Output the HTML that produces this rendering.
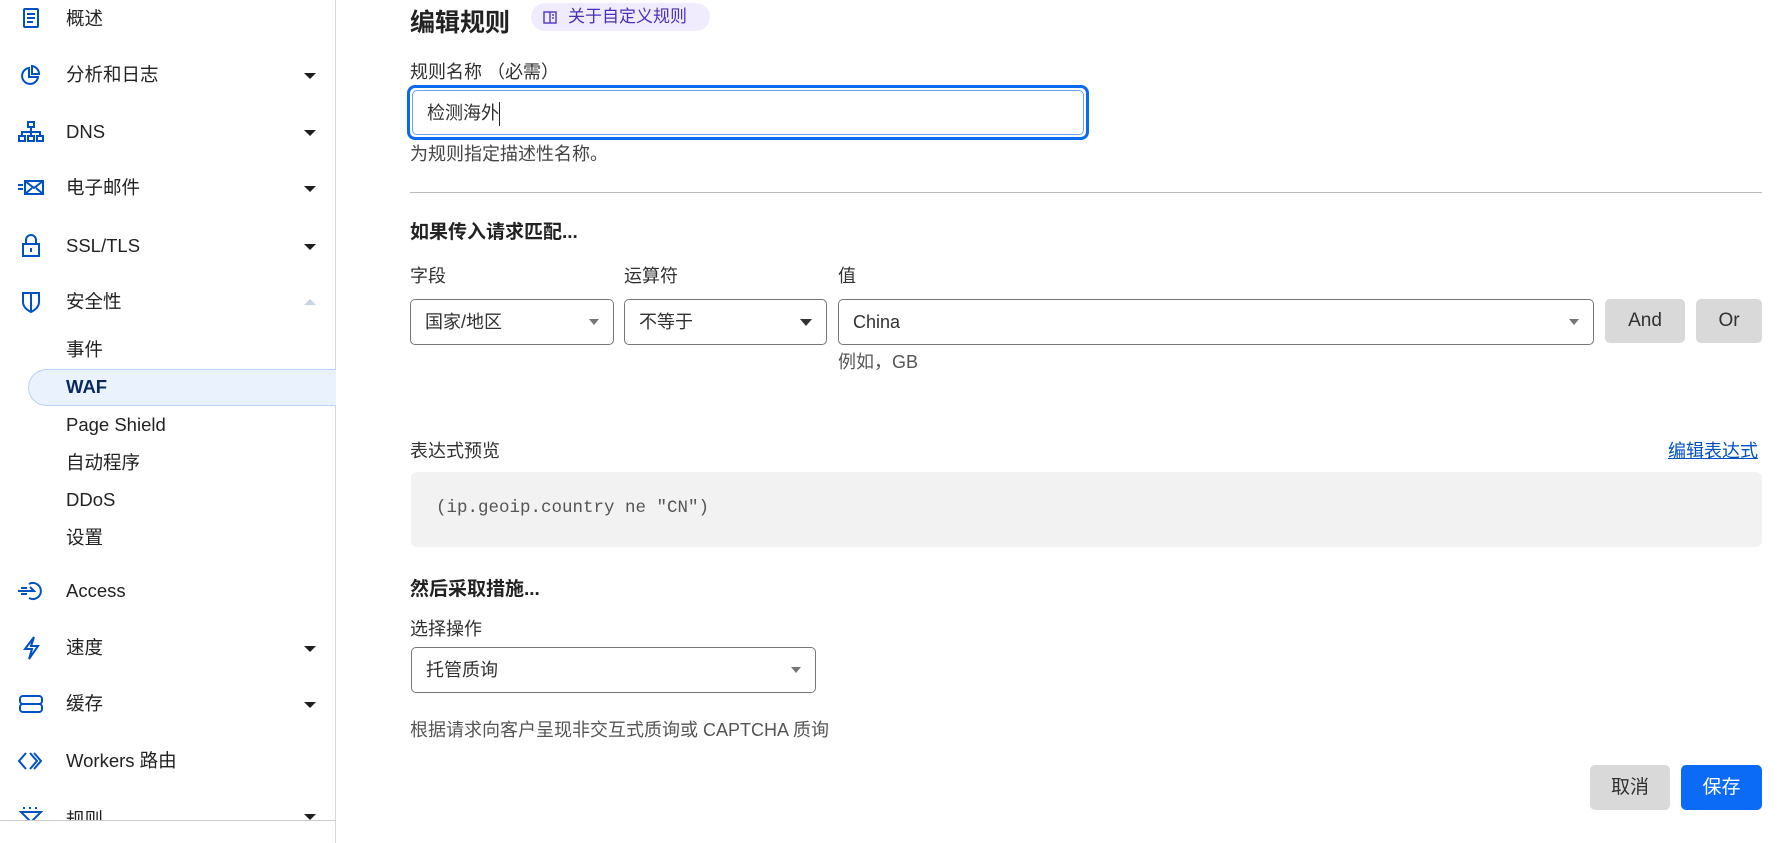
<!DOCTYPE html>
<html><head><meta charset="utf-8"><style>
*{box-sizing:border-box;margin:0;padding:0}
body{width:1788px;height:843px;overflow:hidden;background:#fff;font-family:"Liberation Sans","Noto Sans CJK SC",sans-serif;color:#313131;font-size:18px;position:relative}
.a{position:absolute;white-space:nowrap}
.side{position:absolute;left:0;top:0;width:336px;height:843px;border-right:1px solid #d9d9d9}
.it{position:absolute;left:66px;font-size:18.5px;color:#222;line-height:24px}
.ic{position:absolute;left:17px;width:28px;height:24px}
.car{position:absolute;left:304px;width:0;height:0;border-left:6px solid transparent;border-right:6px solid transparent;border-top:6px solid #1d1f20}
.sel{position:absolute;border:1px solid #777;border-radius:5px;background:#fff;font-size:18px;line-height:44px;padding-left:14px}
.tri{position:absolute;right:14px;top:19px;border-left:6px solid transparent;border-right:6px solid transparent;border-top:7px solid #666}
.btn{position:absolute;background:#d9d9d9;border-radius:5px;text-align:center;font-size:19px;color:#313131}
</style></head><body>
<div class="side">
<svg class="ic" style="top:7px" viewBox="0 0 28 24" fill="none" stroke="#0051c3" stroke-width="2"><rect x="7" y="2" width="14" height="18" rx="1"/><path d="M10 7h8M10 11h8M10 15h6"/></svg>
<div class="it" style="top:7px">概述</div>
<svg class="ic" style="top:63px" viewBox="0 0 28 24" fill="none" stroke="#0051c3" stroke-width="2"><path d="M12 5a8 8 0 1 0 9 9h-9z"/><path d="M15 3a8 8 0 0 1 7 8h-7z"/></svg>
<div class="it" style="top:63px">分析和日志</div><div class="car" style="top:73px"></div>
<svg class="ic" style="top:120px" viewBox="0 0 28 24" fill="none" stroke="#0051c3" stroke-width="2"><rect x="11" y="2" width="6" height="5"/><rect x="2" y="16" width="6" height="5"/><rect x="11" y="16" width="6" height="5"/><rect x="20" y="16" width="6" height="5"/><path d="M14 7v9M5 16v-4h18v4"/></svg>
<div class="it" style="top:120px">DNS</div><div class="car" style="top:130px"></div>
<svg class="ic" style="top:176px" viewBox="0 0 28 24" fill="none" stroke="#0051c3" stroke-width="2"><rect x="8" y="5" width="18" height="13"/><path d="M8 5l9 7 9-7M8 18l7-6M26 18l-7-6M1 9h5M1 13h5"/></svg>
<div class="it" style="top:176px">电子邮件</div><div class="car" style="top:186px"></div>
<svg class="ic" style="top:234px" viewBox="0 0 28 24" fill="none" stroke="#0051c3" stroke-width="2"><rect x="6" y="10" width="16" height="12"/><path d="M9 10V6a5 5 0 0 1 10 0v4M14 14v4"/></svg>
<div class="it" style="top:234px">SSL/TLS</div><div class="car" style="top:244px"></div>
<svg class="ic" style="top:290px" viewBox="0 0 28 24" fill="none" stroke="#0051c3" stroke-width="2"><path d="M6 3h16v9c0 5-4 8-8 10-4-2-8-5-8-10z"/><path d="M14 3v19"/></svg>
<div class="it" style="top:290px">安全性</div><div style="position:absolute;left:304px;top:299px;border-left:6px solid transparent;border-right:6px solid transparent;border-bottom:6px solid #c8d4e4"></div>
<div class="it" style="top:338px">事件</div>
<div style="position:absolute;left:28px;top:369px;width:308px;height:37px;background:#eaf2fd;border:1px solid #b8d2f5;border-right:none;border-radius:19px 0 0 19px"></div>
<div class="it" style="top:375px;font-weight:bold;color:#0a2a5e">WAF</div>
<div class="it" style="top:413px">Page Shield</div>
<div class="it" style="top:451px">自动程序</div>
<div class="it" style="top:488px">DDoS</div>
<div class="it" style="top:526px">设置</div>
<svg class="ic" style="top:579px" viewBox="0 0 28 24" fill="none" stroke="#0051c3" stroke-width="2"><path d="M12 5a8 8 0 1 1 0 14"/><path d="M1 12h16l-4-4M4 9h6M4 15h6"/></svg>
<div class="it" style="top:579px">Access</div>
<svg class="ic" style="top:636px" viewBox="0 0 28 24" fill="none" stroke="#0051c3" stroke-width="2"><path d="M17 1L8 13h7l-3 10 9-13h-7z"/></svg>
<div class="it" style="top:636px">速度</div><div class="car" style="top:646px"></div>
<svg class="ic" style="top:692px" viewBox="0 0 28 24" fill="none" stroke="#0051c3" stroke-width="2"><rect x="3" y="4" width="22" height="8" rx="3"/><rect x="3" y="12" width="22" height="8" rx="3"/></svg>
<div class="it" style="top:692px">缓存</div><div class="car" style="top:702px"></div>
<svg class="ic" style="top:749px" viewBox="0 0 28 24" fill="none" stroke="#0051c3" stroke-width="2"><path d="M9 4l-7 8 7 8M13 4l7 8-7 8M17 4l7 8-7 8"/></svg>
<div class="it" style="top:749px">Workers 路由</div>
<div style="position:absolute;left:0;top:806px;width:336px;height:14px;overflow:hidden">
<svg class="ic" style="top:0px" viewBox="0 0 28 24" fill="none" stroke="#0051c3" stroke-width="2"><path d="M6 2h2M12 2h2M18 2h2M4 6h20l-10 10z"/></svg>
<div class="it" style="top:2px">规则</div></div>
<div class="car" style="top:814px"></div>
<div style="position:absolute;left:0;top:820px;width:336px;height:1px;background:#ccc"></div>
</div>

<div class="a" style="left:410px;top:3px;font-size:25px;font-weight:bold;color:#222">编辑规则</div>
<div class="a" style="left:531px;top:3px;width:179px;height:28px;background:#f1ecfd;border-radius:14px;color:#4a2fb8;font-size:17px;line-height:28px;padding-left:37px">关于自定义规则</div>
<svg class="a" style="left:543px;top:11px" width="14" height="13" viewBox="0 0 14 13" fill="none" stroke="#5a40c8" stroke-width="1.5"><rect x="1" y="1" width="12" height="11"/><path d="M7 1v11M9 4h2M9 7h2"/></svg>

<div class="a" style="left:410px;top:58px">规则名称 （必需）</div>
<div style="position:absolute;left:407px;top:85px;width:682px;height:55px;border:3px solid #0b6bf0;border-radius:8px;padding:2px"><div style="height:100%;border:1px solid #6aa3f3;border-radius:5px;padding-left:14px;line-height:44px;font-size:18px">检测海外<span style="display:inline-block;width:1px;height:24px;background:#222;vertical-align:middle"></span></div></div>
<div class="a" style="left:410px;top:140px;color:#444">为规则指定描述性名称。</div>
<div style="position:absolute;left:410px;top:192px;width:1352px;height:1px;background:#bbb"></div>
<div class="a" style="left:410px;top:217px;font-size:19px;font-weight:bold;color:#222">如果传入请求匹配...</div>
<div class="a" style="left:410px;top:262px">字段</div>
<div class="a" style="left:624px;top:262px">运算符</div>
<div class="a" style="left:838px;top:262px">值</div>
<div class="sel" style="left:410px;top:299px;width:204px;height:46px">国家/地区<div class="tri" style="border-top-color:#777;border-left-width:5px;border-right-width:5px;border-top-width:6px"></div></div>
<div class="sel" style="left:624px;top:299px;width:203px;height:46px">不等于<div class="tri" style="border-top-color:#333"></div></div>
<div class="sel" style="left:838px;top:299px;width:756px;height:46px">China<div class="tri" style="border-top-color:#777;border-left-width:5px;border-right-width:5px;border-top-width:6px"></div></div>
<div class="btn" style="left:1605px;top:299px;width:80px;height:44px;line-height:44px">And</div>
<div class="btn" style="left:1696px;top:299px;width:66px;height:44px;line-height:44px">Or</div>
<div class="a" style="left:838px;top:348px;color:#555">例如，GB</div>
<div class="a" style="left:410px;top:437px">表达式预览</div>
<div class="a" style="left:1668px;top:437px;color:#0051c3;text-decoration:underline">编辑表达式</div>
<div style="position:absolute;left:411px;top:472px;width:1351px;height:75px;background:#f2f2f2;border-radius:6px"></div>
<div class="a" style="left:436px;top:498px;font-family:'Liberation Mono','Noto Serif CJK SC',monospace;font-size:17.5px;color:#555">(ip.geoip.country ne "CN")</div>
<div class="a" style="left:410px;top:574px;font-size:19px;font-weight:bold;color:#222">然后采取措施...</div>
<div class="a" style="left:410px;top:615px">选择操作</div>
<div class="sel" style="left:411px;top:647px;width:405px;height:46px">托管质询<div class="tri" style="border-top-color:#777;border-left-width:5px;border-right-width:5px;border-top-width:6px"></div></div>
<div class="a" style="left:410px;top:716px;color:#555">根据请求向客户呈现非交互式质询或 CAPTCHA 质询</div>
<div class="btn" style="left:1590px;top:765px;width:80px;height:45px;line-height:45px">取消</div>
<div class="btn" style="left:1681px;top:765px;width:81px;height:45px;line-height:45px;background:#0b6bf7;color:#fff">保存</div>
</body></html>
